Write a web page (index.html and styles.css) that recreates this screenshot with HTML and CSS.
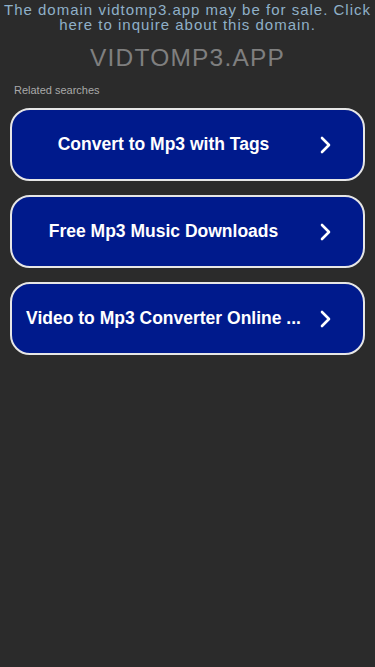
FILE: index.html
```html
<!DOCTYPE html>
<html lang="en">
<head>
    <meta charset="UTF-8">
    <meta name="viewport" content="width=device-width, initial-scale=1.0">
    <title>vidtomp3.app</title>
    <link rel="stylesheet" href="styles.css">
</head>
<body>
    <div class="sale-banner">
        <a href="#">The domain vidtomp3.app may be for sale. Click here to inquire about this domain.</a>
    </div>
    <h1 class="domain-title">VIDTOMP3.APP</h1>
    <div class="related">
        <p class="related-label">Related searches</p>
        <a href="#" class="search-btn">
            <span class="search-text">Convert to Mp3 with Tags</span>
            <svg class="chevron" viewBox="0 0 14 20" width="14" height="20"><path d="M3 3 L10 10 L3 17" fill="none" stroke="#fff" stroke-width="2.6" stroke-linecap="round" stroke-linejoin="round"/></svg>
        </a>
        <a href="#" class="search-btn">
            <span class="search-text">Free Mp3 Music Downloads</span>
            <svg class="chevron" viewBox="0 0 14 20" width="14" height="20"><path d="M3 3 L10 10 L3 17" fill="none" stroke="#fff" stroke-width="2.6" stroke-linecap="round" stroke-linejoin="round"/></svg>
        </a>
        <a href="#" class="search-btn">
            <span class="search-text">Video to Mp3 Converter Online ...</span>
            <svg class="chevron" viewBox="0 0 14 20" width="14" height="20"><path d="M3 3 L10 10 L3 17" fill="none" stroke="#fff" stroke-width="2.6" stroke-linecap="round" stroke-linejoin="round"/></svg>
        </a>
    </div>
</body>
</html>
```

FILE: styles.css
```css
body {
    margin: 0;
    padding: 0;
    background: #2b2b2b;
    font-family: 'Liberation Sans', Arial, sans-serif;
    min-height: 100vh;
}
.sale-banner {
    text-align: center;
    padding: 2px 0 0;
    font-size: 15px;
    line-height: 15px;
}
.sale-banner a {
    color: #8fb0c8;
    text-decoration: none;
    letter-spacing: 1px;
}
.domain-title {
    margin: 11px 0 0;
    text-align: center;
    font-size: 24.5px;
    font-weight: normal;
    line-height: 30px;
    letter-spacing: 1.2px;
    color: #7f7f7f;
}
.related {
    padding: 0 10px;
}
.related-label {
    margin: 11px 0 11px 4px;
    font-size: 11px;
    line-height: 13px;
    color: #a9a9a9;
}
.search-btn {
    display: flex;
    align-items: center;
    height: 73px;
    box-sizing: border-box;
    margin-bottom: 14px;
    padding: 0 30px 0 12px;
    background: #001a8c;
    border: 2px solid #e6e6e6;
    border-radius: 20px;
    color: #fff;
    text-decoration: none;
}
.search-text {
    flex: 1;
    text-align: center;
    font-size: 17.5px;
    font-weight: bold;
    white-space: nowrap;
    overflow: hidden;
}
.chevron {
    margin-left: 16px;
    flex-shrink: 0;
}
```
